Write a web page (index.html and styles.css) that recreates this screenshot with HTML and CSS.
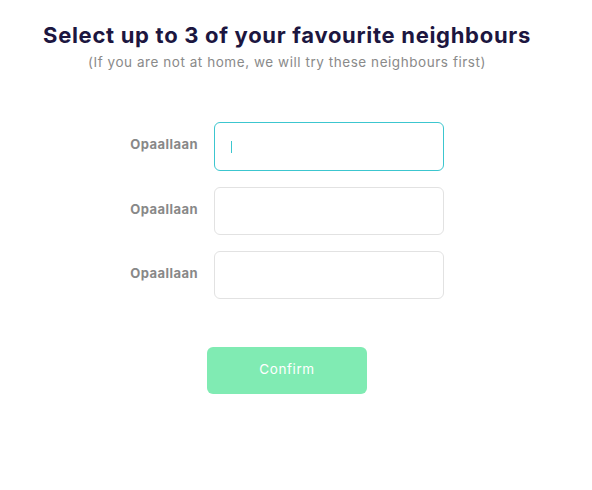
FILE: index.html
```
<!DOCTYPE html>
<html>
<head>
<meta charset="utf-8">
<link rel="stylesheet" href="styles.css">
</head>
<body>
<main class="page">
  <h1 class="title">Select up to 3 of your favourite neighbours</h1>
  <p class="subtitle">(If you are not at home, we will try these neighbours first)</p>
  <form class="form">
    <div class="row">
      <label class="label">Opaallaan</label>
      <div class="input focused"><span class="caret"></span></div>
    </div>
    <div class="row">
      <label class="label">Opaallaan</label>
      <div class="input"></div>
    </div>
    <div class="row">
      <label class="label">Opaallaan</label>
      <div class="input"></div>
    </div>
  </form>
  <div class="actions">
    <button type="button" class="confirm">Confirm</button>
  </div>
</main>
</body>
</html>
```
FILE: styles.css
```
html, body { margin: 0; padding: 0; background: #fff; }
body { font-family: "Inter", "Liberation Sans", sans-serif; }
.page { width: 574px; padding-top: 21px; }
.title {
  margin: 0;
  text-align: center;
  font-size: 22px;
  line-height: 28px;
  font-weight: 700;
  letter-spacing: 0.7px;
  color: #1c1640;
}
.subtitle {
  margin: 5px 0 0;
  text-align: center;
  font-size: 13.5px;
  line-height: 16px;
  letter-spacing: 0.55px;
  color: #8a8a8a;
  font-weight: 400;
}
.form {
  margin-top: 52px;
  padding-left: 114px;
  display: flex;
  flex-direction: column;
  gap: 16px;
}
.row { display: flex; align-items: center; gap: 16px; }
.label {
  width: 84px;
  text-align: right;
  font-size: 13px;
  font-weight: 700;
  letter-spacing: 0.45px;
  color: #888;
  padding-bottom: 5px;
}
.input {
  width: 212px;
  height: 46px;
  border: 1px solid #e2e2e2;
  border-radius: 6px;
  background: #fff;
  display: flex;
  align-items: center;
  padding-left: 16px;
  box-sizing: content-box;
}
.input.focused { border-color: #3cc6cf; height: 47px; }
.caret { width: 1px; height: 12px; background: #3cc6cf; }
.actions { display: flex; justify-content: center; margin-top: 48px; }
.confirm {
  width: 160px;
  height: 47px;
  border: 0;
  border-radius: 6px;
  background: #80ebb3;
  color: #fff;
  font-family: inherit;
  font-size: 13.5px;
  letter-spacing: 0.6px;
  padding: 0 0 4px;
}
```
